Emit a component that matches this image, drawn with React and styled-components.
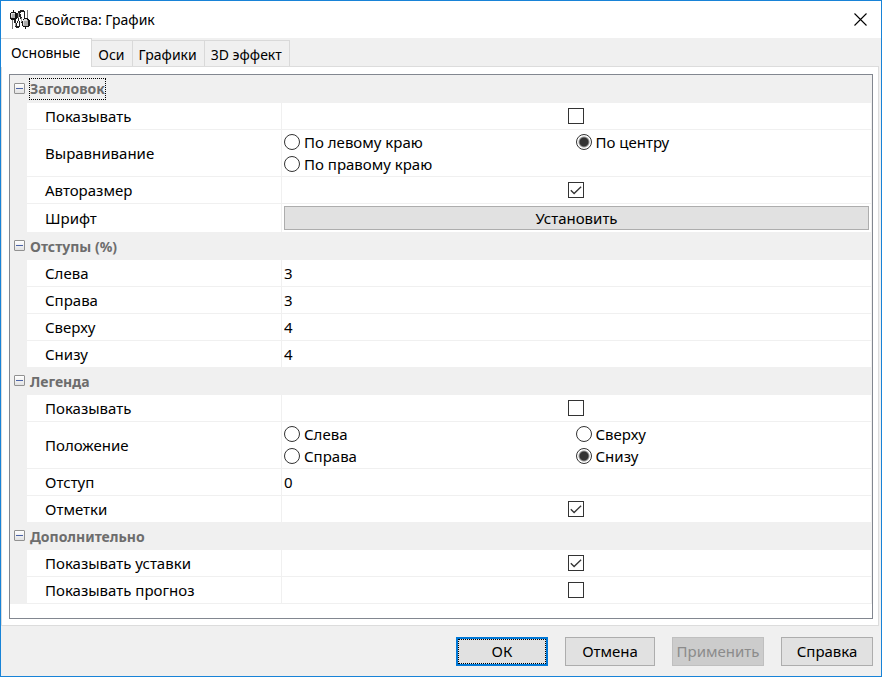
import React, { useState } from "react";
import styled, { createGlobalStyle, css } from "styled-components";

const GlobalStyle = createGlobalStyle`
  *, *::before, *::after { box-sizing: border-box; }
  body { margin: 0; }
  body, button, input { font: 15px/20px "Noto Sans", "Open Sans", sans-serif; color: #000; }
`;

const Dialog = styled.main`
  display: flex;
  flex-direction: column;
  min-height: 100vh;
  border: 1px solid #1883d7;
  background: #f0f0f0;
`;

const TitleBar = styled.header`
  display: flex;
  align-items: center;
  gap: 5px;
  height: 37px;
  padding: 0 6px 0 9px;
  background: #fff;
`;

const Title = styled.h1`
  flex: 1;
  margin: 0;
  font-size: 14px;
  font-weight: 400;
`;

const CloseButton = styled.button`
  display: grid;
  place-items: center;
  width: 30px;
  height: 36px;
  padding: 0;
  border: 0;
  background: none;
`;

const TabStrip = styled.div`
  display: flex;
  align-items: flex-end;
  height: 28px;
`;

const Tab = styled.button`
  height: 26px;
  padding: 4px 7px 1px 6px;
  border: 1px solid #d9d9d9;
  border-width: 1px 1px 0 0;
  background: #f0f0f0;
  font-size: 14px;
  white-space: nowrap;

  ${({ $active }) => $active && css`
    height: 29px;
    margin-bottom: -1px;
    padding: 4px 11px 4px 10px;
    background: #fff;
    z-index: 1;
  `}
`;

const Page = styled.section`
  display: flex;
  flex: 1;
  margin-right: 2px;
  padding: 7px 5px 6px 7px;
  border: 1px solid #dcdcdc;
  background: #fff;
`;

const PropertyGrid = styled.div`
  flex: 1;
  border: 1px solid #828790;
  background: #fff;
`;

const GroupBox = styled.section`
  padding-left: 17px;
  background: #f0f0f0;
`;

const GroupHeader = styled.header`
  display: flex;
  align-items: center;
  gap: 4px;
  height: ${({ $first }) => ($first ? 28 : 27)}px;
  margin-left: -13px;
`;

const Toggle = styled.button`
  display: grid;
  place-items: center;
  width: 11px;
  height: 11px;
  margin-bottom: 2px;
  padding: 0;
  border: 1px solid #919191;
  border-radius: 1px;
  background: linear-gradient(#fff, #e2e2e2);

  &::before {
    content: "";
    width: 7px;
    height: 1px;
    background: #4b63a7;
  }
`;

const GroupTitle = styled.h2`
  margin: 0;
  padding: 0;
  border: 1px dotted ${({ $focused }) => ($focused ? "#000" : "transparent")};
  color: #6d6d6d;
  font-size: 14px;
  font-weight: 700;
`;

const PropertyRow = styled.div`
  display: grid;
  grid-template-columns: 255px 1fr;
  min-height: 27px;
  border: 1px solid #f0f0f0;
  border-width: 0 1px 1px 0;
  background: #fff;
`;

const PropertyName = styled.label`
  display: flex;
  align-items: center;
  padding: 0 8px 0 18px;
  border-right: 1px solid #f0f0f0;
`;

const PropertyValue = styled.div`
  display: flex;
  align-items: center;
  justify-content: ${({ $type }) => ($type === "check" ? "center" : "stretch")};
  padding: 1px ${({ $type }) => ($type === "button" ? 2 : 4)}px 1px 2px;
`;

const NumberField = styled.input`
  width: 100%;
  height: 22px;
  padding: 0;
  border: 0;
  outline: 0;
  background: transparent;
`;

const TickWrap = styled.span`
  display: grid;
  width: 16px;
  height: 16px;

  & > * { grid-area: 1 / 1; }
  svg { pointer-events: none; }
`;

const TickBox = styled.input`
  width: 16px;
  height: 16px;
  margin: 0;
  appearance: none;
  border: 1px solid #333;
  background: #fff;
`;

const RadioGroup = styled.div`
  display: grid;
  grid-template-columns: 1fr 1fr;
  width: 100%;
`;

const RadioOption = styled.label`
  display: flex;
  align-items: center;
  gap: 4px;
  height: 22px;
`;

const RadioButton = styled.input`
  width: 16px;
  height: 16px;
  margin: 0;
  appearance: none;
  border: 1px solid #333;
  border-radius: 50%;
  background: #fff;

  &:checked { background: radial-gradient(circle, #333 4px, #fff 6px); }
`;

const PushButton = styled.button`
  padding: 0 0 1px;
  border: 1px solid #adadad;
  background: #e1e1e1;
`;

const FontButton = styled(PushButton)`
  width: 100%;
  height: 24px;
  margin: 1px 0;
`;

const Footer = styled.footer`
  display: flex;
  justify-content: flex-end;
  gap: 17px;
  padding: 11px 8px 10px;
`;

const DialogButton = styled(PushButton)`
  width: ${({ $narrow }) => ($narrow ? 90 : 92)}px;
  height: 29px;

  &:disabled {
    border-color: #bfbfbf;
    background: #ccc;
    color: #8b8b8b;
  }

  ${({ $default }) => $default && css`
    border: 2px solid #0078d7;
    outline: 1px dotted #000;
    outline-offset: -3px;
  `}
`;

function ChartIcon() {
  return (
    <svg width="20" height="20" viewBox="0 0 20 20" shapeRendering="crispEdges" aria-hidden="true">
      <path d="M2 9h1v10H2zM17 0h1v9h-1z" fill="#777" />
      <path d="M1 2h2V0h1v2h2v1h1v6H6v1H1V9H0V3h1z" fill="#111" />
      <path d="M1 3h4v5H1z" fill="#aaa" />
      <path d="M1 3h4v1H1zM1 4h1v3H1z" fill="#ddd" />
      <path d="M8 1h2V0h4v1h1v7h-1V2h-3v1h-1v4H9v4H8v2H7v-2h1V8H7V3h1z" fill="#222" />
      <path d="M10 4h1v3h1v6h1v3h-1v-3h-1V9h-1z" fill="#222" />
      <path d="M5 10h1v3h1v3h2v-5h1v6H9v1H6v-1H5v-4H4v-3z" fill="#222" />
      <path d="M8 3h1v5H8zM11 8h1v4h-1zM5 13h1v3H5z" fill="#999" />
      <path d="M14 8h4v1h1v1h1v6h-1v1h-3v2h-1v-2h-2v-1h-1v-5h1V9h1z" fill="#111" />
      <path d="M13 10h5v6h-5z" fill="#aaa" />
      <path d="M14 9h3v1h-3zM13 10h4v1h-4zM13 11h1v4h-1z" fill="#ddd" />
    </svg>
  );
}

function CloseIcon() {
  return (
    <svg width="13" height="13" viewBox="0 0 13 13" aria-hidden="true">
      <path d="M.5.5l12 12M12.5.5l-12 12" fill="none" stroke="#000" strokeWidth="1.1" />
    </svg>
  );
}

function CheckMark() {
  return (
    <svg width="16" height="16" viewBox="0 0 16 16" aria-hidden="true">
      <path d="M2.8 8.3l3.3 3.2 7-6.8" fill="none" stroke="#333" strokeWidth="1.3" />
    </svg>
  );
}

function Check({ id, initial }) {
  const [on, setOn] = useState(initial);
  return (
    <TickWrap>
      <TickBox id={id} type="checkbox" checked={on} onChange={() => setOn(!on)} />
      {on && <CheckMark />}
    </TickWrap>
  );
}

function Radios({ id, label, options, initial }) {
  return (
    <RadioGroup role="radiogroup" aria-label={label}>
      {options.map((text) => (
        <RadioOption key={text}>
          <RadioButton type="radio" name={id} defaultChecked={text === initial} />
          <span>{text}</span>
        </RadioOption>
      ))}
    </RadioGroup>
  );
}

const groups = [
  {
    title: "Заголовок",
    focused: true,
    rows: [
      { id: "title-show", label: "Показывать", type: "check", value: false },
      { id: "title-align", label: "Выравнивание", type: "radio", value: "По центру", options: ["По левому краю", "По центру", "По правому краю"] },
      { id: "title-auto", label: "Авторазмер", type: "check", value: true },
      { id: "title-font", label: "Шрифт", type: "button", value: "Установить" },
    ],
  },
  {
    title: "Отступы (%)",
    rows: [
      { id: "pad-left", label: "Слева", type: "number", value: "3" },
      { id: "pad-right", label: "Справа", type: "number", value: "3" },
      { id: "pad-top", label: "Сверху", type: "number", value: "4" },
      { id: "pad-bottom", label: "Снизу", type: "number", value: "4" },
    ],
  },
  {
    title: "Легенда",
    rows: [
      { id: "legend-show", label: "Показывать", type: "check", value: false },
      { id: "legend-place", label: "Положение", type: "radio", value: "Снизу", options: ["Слева", "Сверху", "Справа", "Снизу"] },
      { id: "legend-pad", label: "Отступ", type: "number", value: "0" },
      { id: "legend-marks", label: "Отметки", type: "check", value: true },
    ],
  },
  {
    title: "Дополнительно",
    rows: [
      { id: "extra-limits", label: "Показывать уставки", type: "check", value: true },
      { id: "extra-forecast", label: "Показывать прогноз", type: "check", value: false },
    ],
  },
];

function Editor({ row }) {
  if (row.type === "check") return <Check id={row.id} initial={row.value} />;
  if (row.type === "radio") return <Radios id={row.id} label={row.label} options={row.options} initial={row.value} />;
  if (row.type === "button") return <FontButton id={row.id} type="button">{row.value}</FontButton>;
  return <NumberField id={row.id} type="text" inputMode="numeric" defaultValue={row.value} />;
}

function Group({ group, first }) {
  const [open, setOpen] = useState(true);
  return (
    <GroupBox>
      <GroupHeader $first={first}>
        <Toggle type="button" aria-label={group.title} aria-expanded={open} onClick={() => setOpen(!open)} />
        <GroupTitle $focused={group.focused}>{group.title}</GroupTitle>
      </GroupHeader>
      {open && group.rows.map((row) => (
        <PropertyRow key={row.id}>
          <PropertyName as={row.type === "radio" ? "span" : "label"} htmlFor={row.type === "radio" ? undefined : row.id}>
            {row.label}
          </PropertyName>
          <PropertyValue $type={row.type}>
            <Editor row={row} />
          </PropertyValue>
        </PropertyRow>
      ))}
    </GroupBox>
  );
}

export default function App() {
  return (
    <Dialog>
      <GlobalStyle />
      <TitleBar>
        <ChartIcon />
        <Title>Свойства: График</Title>
        <CloseButton type="button" aria-label="Закрыть"><CloseIcon /></CloseButton>
      </TitleBar>
      <TabStrip role="tablist">
        <Tab type="button" role="tab" aria-selected="true" $active>Основные</Tab>
        <Tab type="button" role="tab" aria-selected="false">Оси</Tab>
        <Tab type="button" role="tab" aria-selected="false">Графики</Tab>
        <Tab type="button" role="tab" aria-selected="false">3D эффект</Tab>
      </TabStrip>
      <Page role="tabpanel">
        <PropertyGrid>
          {groups.map((group, index) => (
            <Group key={group.title} group={group} first={index === 0} />
          ))}
        </PropertyGrid>
      </Page>
      <Footer>
        <DialogButton type="button" $default>ОК</DialogButton>
        <DialogButton type="button" $narrow>Отмена</DialogButton>
        <DialogButton type="button" disabled>Применить</DialogButton>
        <DialogButton type="button">Справка</DialogButton>
      </Footer>
    </Dialog>
  );
}
